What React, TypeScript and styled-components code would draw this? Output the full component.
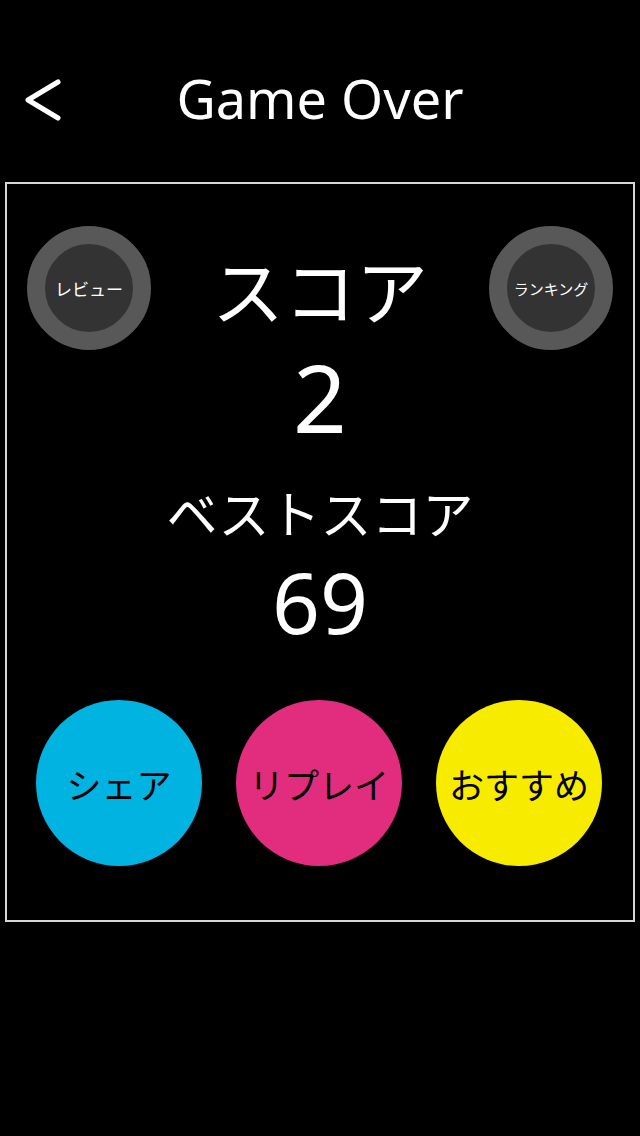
import styled, { createGlobalStyle } from "styled-components";

const GlobalStyle = createGlobalStyle`
  html, body {
    margin: 0;
    padding: 0;
    background: #000;
  }
  body {
    font-family: "Noto Sans CJK JP", "Noto Sans", sans-serif;
    color: #fff;
  }
`;

const Page = styled.div`
  width: 640px;
  height: 1136px;
  background: #000;
  display: flex;
  flex-direction: column;
`;

const Header = styled.div`
  height: 182px;
  display: grid;
  grid-template-columns: 100px 1fr 100px;
  align-items: start;
`;

const BackButton = styled.button`
  margin-top: 78px;
  margin-left: 22px;
  width: 46px;
  height: 46px;
  padding: 0;
  background: none;
  border: 0;
`;

const Title = styled.h1`
  margin: 65px 0 0;
  text-align: center;
  font-family: "Noto Sans", "Noto Sans CJK JP", sans-serif;
  font-weight: 400;
  font-size: 54px;
  line-height: 66px;
  color: #fff;
`;

const Panel = styled.div`
  margin: 0 5px;
  height: 740px;
  box-sizing: border-box;
  border: 2px solid #d6d6d6;
  display: flex;
  flex-direction: column;
  align-items: center;
`;

const TopRow = styled.div`
  margin-top: 42px;
  width: 100%;
  box-sizing: border-box;
  padding: 0 20px;
  display: flex;
  justify-content: space-between;
  align-items: center;
`;

const RoundLink = styled.button<{ $small?: boolean }>`
  width: 124px;
  height: 124px;
  border-radius: 50%;
  background: #333;
  border: 18px solid #585858;
  box-sizing: border-box;
  padding: 0;
  color: #fff;
  font-family: "Noto Sans CJK JP", sans-serif;
  font-size: ${(p) => (p.$small ? "15px" : "17px")};
  white-space: nowrap;
  display: flex;
  align-items: center;
  justify-content: center;
`;

const Heading = styled.div<{ $size: number; $gap?: number }>`
  margin-top: ${(p) => p.$gap ?? 0}px;
  font-size: ${(p) => p.$size}px;
  line-height: 1.1;
  text-align: center;
  color: #fff;
`;

const ScoreValue = styled.div<{ $size: number; $gap?: number }>`
  margin-top: ${(p) => p.$gap ?? 0}px;
  font-family: "Noto Sans", sans-serif;
  font-size: ${(p) => p.$size}px;
  line-height: 1;
  text-align: center;
  color: #fff;
`;

const ActionRow = styled.div`
  margin-top: auto;
  margin-bottom: 54px;
  width: 100%;
  box-sizing: border-box;
  padding: 0 29px;
  display: flex;
  gap: 34px;
`;

const ActionButton = styled.button<{ $color: string }>`
  width: 166px;
  height: 166px;
  border-radius: 50%;
  border: 0;
  padding: 0;
  background: ${(p) => p.$color};
  color: #000;
  font-family: "Noto Sans CJK JP", sans-serif;
  font-size: 35px;
  white-space: nowrap;
`;

export default function App() {
  return (
    <Page>
      <GlobalStyle />
      <Header>
        <BackButton aria-label="back">
          <svg width="46" height="46" viewBox="0 0 46 46">
            <polyline
              points="36,4 6,22 36,40"
              fill="none"
              stroke="#fff"
              strokeWidth="5"
              strokeLinecap="round"
              strokeLinejoin="round"
            />
          </svg>
        </BackButton>
        <Title>Game Over</Title>
        <div />
      </Header>
      <Panel>
        <TopRow>
          <RoundLink>レビュー</RoundLink>
          <Heading $size={72}>スコア</Heading>
          <RoundLink $small>ランキング</RoundLink>
        </TopRow>
        <ScoreValue $size={94} $gap={0}>2</ScoreValue>
        <Heading $size={51} $gap={40}>ベストスコア</Heading>
        <ScoreValue $size={84} $gap={20}>69</ScoreValue>
        <ActionRow>
          <ActionButton $color="#00b3e0">シェア</ActionButton>
          <ActionButton $color="#e22c7e">リプレイ</ActionButton>
          <ActionButton $color="#f7ec00">おすすめ</ActionButton>
        </ActionRow>
      </Panel>
    </Page>
  );
}
